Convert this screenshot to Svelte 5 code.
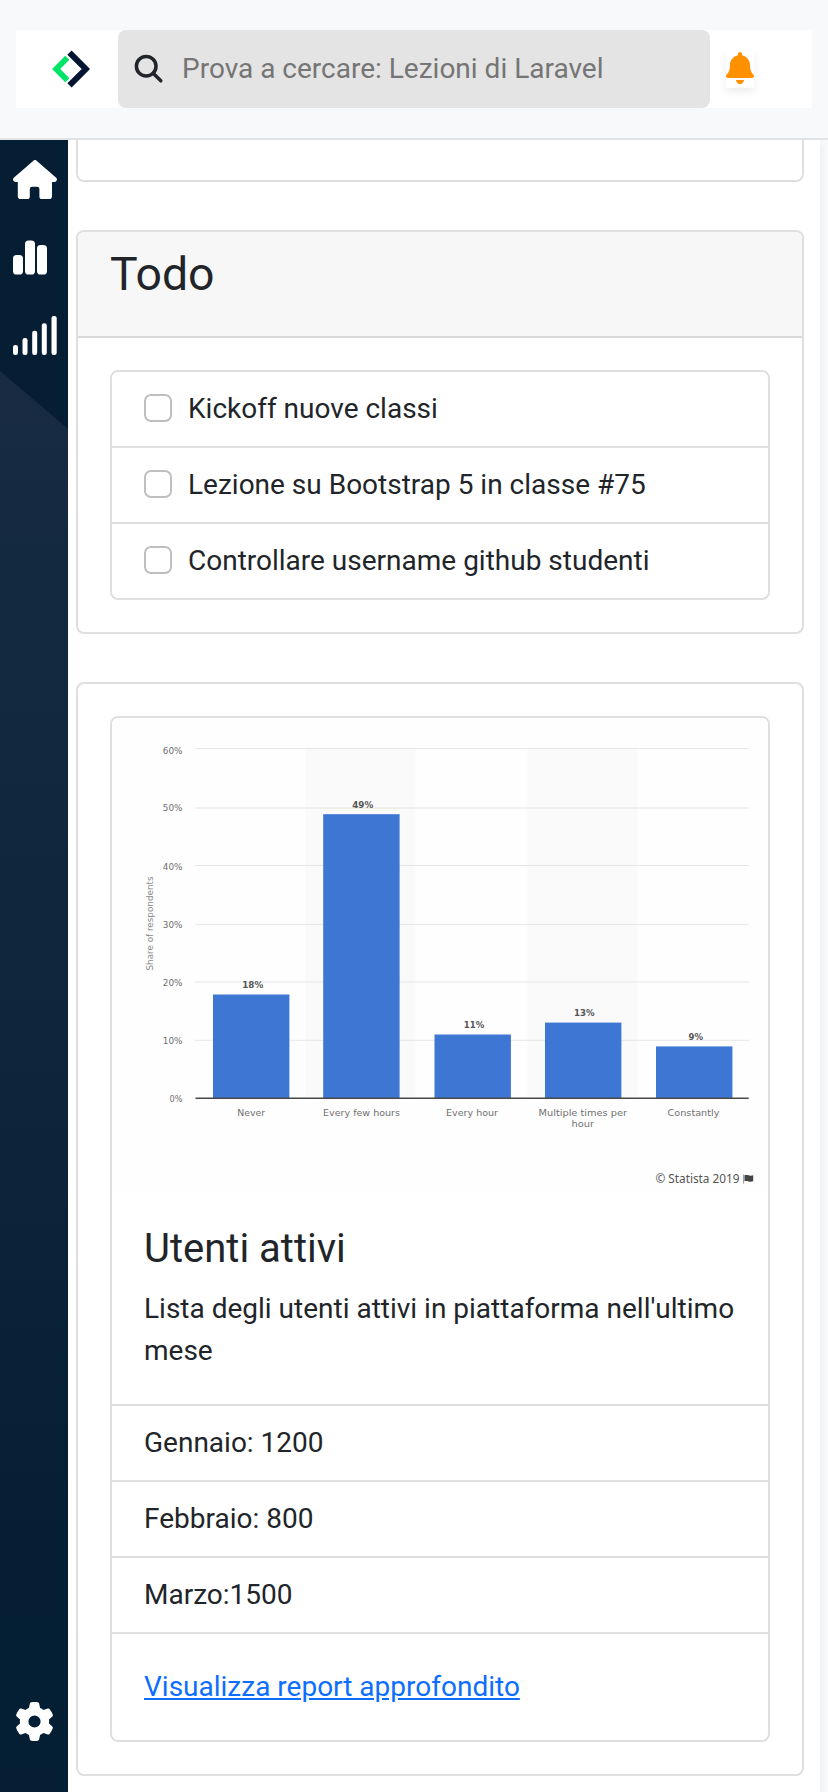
<script>
  const todos = [
    'Kickoff nuove classi',
    'Lezione su Bootstrap 5 in classe #75',
    'Controllare username github studenti'
  ];
  const months = ['Gennaio: 1200', 'Febbraio: 800', 'Marzo:1500'];

  const grid = [
    { y: 748.5, ty: 753.6, label: '60%' },
    { y: 808, ty: 811.4, label: '50%' },
    { y: 865.5, ty: 869.7, label: '40%' },
    { y: 924.3, ty: 927.7, label: '30%' },
    { y: 982, ty: 986, label: '20%' },
    { y: 1040.3, ty: 1044, label: '10%' }
  ];
  const bars = [
    { x: 213, y: 994.5, v: '18%', vx: 252.7, vw: 21, lines: [['Never', 251.2, 28]] },
    { x: 323.2, y: 814.2, v: '49%', vx: 362.7, vw: 21, lines: [['Every few hours', 361.5, 77]] },
    { x: 434.5, y: 1034.5, v: '11%', vx: 474, vw: 20.5, lines: [['Every hour', 472, 52]] },
    { x: 545, y: 1022.6, v: '13%', vx: 584.3, vw: 20.5, lines: [['Multiple times per', 582.8, 88.5], ['hour', 582.8, 22.5]] },
    { x: 656, y: 1046.4, v: '9%', vx: 695.7, vw: 14.5, lines: [['Constantly', 693.5, 52]] }
  ];
</script>

<div class="page">
  <header>
    <nav>
      <div class="brand">
        <svg width="40" height="40" viewBox="51 49 40 40" fill="none" stroke-width="6">
          <path d="M67.3 57.8 56.2 69l11.1 11.2" stroke="#00e467" stroke-width="5.8" />
          <path d="M69.5 52.6 85.8 69 69.5 85.4" stroke="#021431" />
        </svg>
      </div>
      <div class="search">
        <svg width="30" height="30" viewBox="0 0 30 30" fill="none" stroke="#212529" stroke-width="3.5">
          <circle cx="12.2" cy="12.2" r="9.8" />
          <path d="m19.2 19.2 7.6 7.600" stroke-linecap="round" />
        </svg>
        <span>Prova a cercare: Lezioni di Laravel</span>
      </div>
      <div class="bell">
        <svg width="28" height="32" viewBox="0 0 448 512" fill="#ff9100">
          <path d="M224 512c35.32 0 63.97-28.65 63.97-64H160.03c0 35.35 28.65 64 63.97 64zm215.39-149.71c-19.32-20.76-55.47-51.99-55.47-154.29 0-77.7-54.48-139.9-127.94-155.16V32c0-17.67-14.32-32-31.98-32s-31.98 14.33-31.98 32v20.84C118.56 68.1 64.08 130.3 64.08 208c0 102.3-36.15 133.53-55.47 154.29-6 6.45-8.66 14.16-8.61 21.71.11 16.4 12.98 32 32.1 32h383.8c19.12 0 32-15.6 32.1-32 .05-7.55-2.61-15.27-8.61-21.71z" />
        </svg>
      </div>
    </nav>
  </header>

  <div class="shell">
    <aside>
      <div class="links">
        <svg width="44" height="39" viewBox="0 0 44 39" fill="#fff">
          <path d="M20.4.7a2.3 2.3 0 0 1 3.2 0l19.6 17.1c1.5 1.5.6 4.1-1.6 4.1H39v14.3a2.8 2.8 0 0 1-2.8 2.8H29a2.6 2.6 0 0 1-2.6-2.6v-7.3a2.4 2.4 0 0 0-2.4-2.4h-4.8a2.4 2.4 0 0 0-2.4 2.4v7.3a2.6 2.6 0 0 1-2.6 2.6H7.6a2.8 2.8 0 0 1-2.8-2.8V21.900H2.300C.1 21.900-.7 19.300.8 17.800z" />
        </svg>
        <svg width="44" height="39" viewBox="0 0 44 39" fill="#fff">
          <rect x="0" y="17" width="10" height="19.500" rx="3.6" />
          <rect x="12" y="2.5" width="10" height="34" rx="3.6" />
          <rect x="24" y="7" width="10" height="29.500" rx="3.6" />
        </svg>
        <svg width="44" height="39" viewBox="0 0 44 39" fill="#fff">
          <rect x="0" y="29" width="5" height="10" rx="2.2" />
          <rect x="9.5" y="22" width="5" height="17" rx="2.2" />
          <rect x="19.200" y="14.7" width="5" height="24.3" rx="2.2" />
          <rect x="28.800" y="7.3" width="5" height="31.7" rx="2.2" />
          <rect x="38.500" y="0" width="5.2" height="39" rx="2.2" />
        </svg>
      </div>
      <svg class="gear" width="39" height="39" viewBox="0 0 512 512" fill="#fff">
        <path d="M495.9 166.6c3.2 8.7 .5 18.4-6.4 24.6l-43.3 39.4c1.1 8.3 1.7 16.8 1.7 25.4s-.6 17.1-1.7 25.4l43.3 39.4c6.9 6.2 9.6 15.9 6.4 24.6c-4.4 11.9-9.7 23.3-15.8 34.3l-4.7 8.1c-6.6 11-14 21.4-22.1 31.2c-5.9 7.2-15.7 9.6-24.5 6.8l-55.7-17.7c-13.4 10.3-28.2 18.9-44 25.4l-12.5 57.1c-2 9.1-9 16.3-18.2 17.8c-13.8 2.3-28 3.5-42.5 3.5s-28.7-1.2-42.5-3.5c-9.2-1.5-16.2-8.7-18.2-17.8l-12.5-57.1c-15.8-6.5-30.6-15.1-44-25.4L83.1 425.9c-8.8 2.8-18.6 .3-24.5-6.8c-8.1-9.8-15.5-20.2-22.1-31.2l-4.7-8.1c-6.1-11-11.4-22.4-15.8-34.3c-3.2-8.7-.5-18.4 6.4-24.6l43.3-39.4C64.6 273.1 64 264.6 64 256s.6-17.1 1.7-25.4L22.4 191.2c-6.9-6.2-9.6-15.9-6.4-24.6c4.4-11.9 9.7-23.3 15.8-34.3l4.7-8.1c6.6-11 14-21.4 22.1-31.2c5.9-7.2 15.7-9.6 24.5-6.8l55.7 17.7c13.4-10.3 28.2-18.9 44-25.4l12.5-57.1c2-9.1 9-16.3 18.2-17.8C227.3 1.2 241.5 0 256 0s28.7 1.2 42.5 3.5c9.2 1.5 16.2 8.7 18.2 17.8l12.5 57.1c15.8 6.5 30.6 15.1 44 25.4l55.7-17.7c8.8-2.8 18.6-.3 24.5 6.8c8.1 9.8 15.5 20.2 22.1 31.2l4.7 8.1c6.1 11 11.4 22.4 15.8 34.3zM256 336a80 80 0 1 0 0-160 80 80 0 1 0 0 160z" />
      </svg>
    </aside>

    <main>
      <section class="card tail"></section>

      <section class="card">
        <div class="card-header"><h2>Todo</h2></div>
        <div class="card-body">
          <ul class="list">
            {#each todos as todo}
              <li><label><input type="checkbox" /><span>{todo}</span></label></li>
            {/each}
          </ul>
        </div>
      </section>

      <section class="card">
        <div class="card-body">
          <article class="card">
            <svg class="chart" width="656" height="474" viewBox="112 718 656 474">
              <rect x="112" y="718" width="656" height="474" fill="#fefefe" />
              <rect x="305.500" y="748.5" width="110" height="349" fill="#fafafa" />
              <rect x="527.500" y="748.5" width="110" height="349" fill="#fafafa" />
              {#each grid as g}
                <path d="M195.5 {g.y}H748.5" stroke="#cfcfcf" stroke-dasharray="1 1" />
                <text class="tick" x="182.5" y={g.ty} text-anchor="end" textLength="19.7" lengthAdjust="spacingAndGlyphs">{g.label}</text>
              {/each}
              <text class="tick" x="182.5" y="1102.2" text-anchor="end" textLength="13" lengthAdjust="spacingAndGlyphs">0%</text>
              <text class="axis" transform="translate(153.3 970.5) rotate(-90)" textLength="94" lengthAdjust="spacingAndGlyphs">Share of respondents</text>
              {#each bars as b}
                <rect x={b.x} y={b.y} width="76.4" height={1098 - b.y} fill="#3e76d3" />
                <text class="value" x={b.vx} y={b.y - 6.4} text-anchor="middle" textLength={b.vw} lengthAdjust="spacingAndGlyphs">{b.v}</text>
                {#each b.lines as [text, x, w], i}
                  <text class="tick" {x} y={1116.3 + i * 10.8} text-anchor="middle" textLength={w} lengthAdjust="spacingAndGlyphs">{text}</text>
                {/each}
              {/each}
              <path d="M195.5 1098.2H748.7" stroke="#484848" stroke-width="1.4" />
              <text class="source" x="655.5" y="1183" textLength="84" lengthAdjust="spacingAndGlyphs">© Statista 2019</text>
              <path d="M743.6 1174.5v9" stroke="#777" stroke-width=".8" />
              <path d="M744.5 1175.3c3-1.2 4.5 1.3 8.7 0v6c-4 1.4-5.6-1.2-8.7 0z" fill="#444" />
            </svg>
            <div class="card-body text">
              <h3>Utenti attivi</h3>
              <p>Lista degli utenti attivi in piattaforma nell'ultimo mese</p>
            </div>
            <ul class="months">
              {#each months as month}
                <li>{month}</li>
              {/each}
            </ul>
            <div class="card-body"><a href="#report">Visualizza report approfondito</a></div>
          </article>
        </div>
      </section>
    </main>
  </div>
</div>

<style>
  :global(body) {
    margin: 0;
    background: #f8f9fb;
  }
  .page,
  .page * {
    box-sizing: border-box;
  }
  .page {
    width: 828px;
    height: 1792px;
    overflow: hidden;
    display: flex;
    flex-direction: column;
    font: 28px/42px Roboto, sans-serif;
    color: #212529;
  }
  svg {
    display: block;
    flex: none;
  }
  header {
    height: 140px;
    flex: none;
    padding: 30px 16px;
    background: #f8f9fb;
    border-bottom: 2px solid #e3e4e5;
  }
  nav {
    display: flex;
    align-items: center;
    height: 78px;
    background: #fff;
  }
  .brand {
    width: 102px;
    padding-left: 35px;
  }
  .search {
    width: 592px;
    height: 78px;
    padding-left: 15.5px;
    display: flex;
    align-items: center;
    gap: 18.5px;
    border-radius: 8px;
    background: #e4e4e4;
    color: #757575;
  }
  .search span {
    white-space: nowrap;
  }
  .bell {
    margin-left: 16px;
    width: 28px;
    height: 38px;
    padding-top: 2px;
    background: #fff;
    box-shadow: 0 4px 8px rgba(0, 0, 0, 0.075);
  }
  .shell {
    flex: 1;
    min-height: 0;
    display: flex;
  }
  aside {
    position: relative;
    width: 68px;
    flex: none;
    display: flex;
    flex-direction: column;
    justify-content: space-between;
    padding: 20px 0 51px;
    background: linear-gradient(#061e33 0 88%, #041f33 93%, #051e34);
  }
  aside::before {
    content: '';
    position: absolute;
    inset: 231px 0 0;
    background: linear-gradient(#182b42, #12293f 18%, #0d243b 52%, #061e34 84%, #041f33 91%, #051e34);
    clip-path: polygon(0 0, 100% 58px, 100% 100%, 0 100%);
  }
  .links {
    display: flex;
    flex-direction: column;
    gap: 39px;
    padding-left: 13px;
  }
  .gear {
    position: relative;
    margin-left: 15px;
  }
  main {
    flex: 1;
    margin-right: 8px;
    padding: 0 16px 0 8px;
    background: #fff;
    display: flex;
    flex-direction: column;
    gap: 48px;
    box-shadow: 0 4px 8px rgba(0, 0, 0, 0.075);
  }
  .card {
    flex: none;
    background: #fff;
    border: 2px solid #dfdfdf;
    border-radius: 8px;
    overflow: hidden;
  }
  .tail {
    height: 42px;
    border-top: 0;
    border-radius: 0 0 8px 8px;
  }
  .card-header {
    height: 106px;
    padding: 16px 32px;
    background: #f7f7f7;
    border-bottom: 2px solid #d8d8d8;
  }
  h2,
  h3,
  p,
  ul {
    margin: 0;
    padding: 0;
    font-weight: 400;
  }
  h2 {
    font-size: 46.4px;
    line-height: 52px;
  }
  h3 {
    font-size: 40px;
    line-height: 50px;
    margin-bottom: 14px;
  }
  .card-body {
    padding: 32px;
  }
  li {
    list-style: none;
    height: 76px;
    padding: 16px 32px;
    border-bottom: 2px solid #dfdfdf;
  }
  .list {
    border: 2px solid #dfdfdf;
    border-radius: 8px;
  }
  .list li:last-child {
    height: 74px;
    border-bottom: 0;
  }
  label {
    display: flex;
    gap: 16px;
  }
  input {
    appearance: none;
    flex: none;
    width: 28px;
    height: 28px;
    margin: 6px 0 0;
    border: 2px solid #bfbfbf;
    border-radius: 7px;
    background: #fff;
  }
  .months {
    border-top: 2px solid #dfdfdf;
  }
  a {
    color: #0d6efd;
  }
  .chart {
    font-family: 'DejaVu Sans', sans-serif;
  }
  .tick {
    font-size: 9.3px;
    fill: #707070;
  }
  .axis {
    font-size: 8.7px;
    fill: #888;
  }
  .value {
    font-size: 9px;
    font-weight: 700;
    fill: #555;
  }
  .source {
    font-family: 'Noto Sans', sans-serif;
    font-size: 12px;
    fill: #555;
  }
</style>
